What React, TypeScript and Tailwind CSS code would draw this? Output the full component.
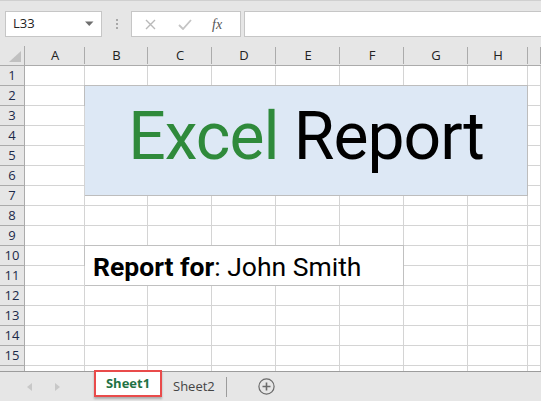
import { Fragment } from "react"

const COLS = ["A", "B", "C", "D", "E", "F", "G", "H", ""]
const ROWS = Array.from({ length: 16 }, (_, i) => i + 1)

// merged ranges (1-based, inclusive; col 1 = A)
const MERGES = [
  { c0: 2, c1: 8, r0: 2, r1: 7 },
  { c0: 2, c1: 6, r0: 10, r1: 11 },
]

function covered(c: number, r: number) {
  return MERGES.some(m => c >= m.c0 && c <= m.c1 && r >= m.r0 && r <= m.r1)
}

function NameBox() {
  return (
    <div className="flex items-center justify-between w-[97px] h-[26px] bg-white border border-[#c6c6c6] pl-[7px] pr-[7px]">
      <span className="text-[13px] text-[#222]">L33</span>
      <svg width="9" height="6" viewBox="0 0 9 6"><path d="M0 0.5h8.5L4.25 5z" fill="#6e6e6e" /></svg>
    </div>
  )
}

function FormulaButtons() {
  return (
    <div className="flex items-center w-[110px] h-[26px] bg-white border border-[#c6c6c6]">
      <svg className="ml-[13px]" width="11" height="11" viewBox="0 0 11 11">
        <path d="M1 1l9 9M10 1l-9 9" stroke="#b9b9b9" strokeWidth="1.4" />
      </svg>
      <svg className="ml-[22px]" width="14" height="11" viewBox="0 0 14 11">
        <path d="M1 6l4 4 8-9" stroke="#c4c4c4" strokeWidth="1.8" fill="none" />
      </svg>
      <span className="ml-[20px] italic text-[14px] text-[#555]" style={{ fontFamily: "'Liberation Serif', serif" }}>fx</span>
    </div>
  )
}

function SheetTabs() {
  return (
    <div className="flex items-center h-[30px] bg-[#e6e6e6] border-t border-[#9c9c9c]">
      <svg className="ml-[27px]" width="5" height="8" viewBox="0 0 5 8"><path d="M5 0v8L0 4z" fill="#c8c8c8" /></svg>
      <svg className="ml-[23px]" width="5" height="8" viewBox="0 0 5 8"><path d="M0 0v8l5-4z" fill="#c8c8c8" /></svg>
      <div className="ml-[34px] self-start mt-[-2px] w-[68px] h-[27px] border-[2px] border-[#e94b4b] flex items-center justify-center bg-white shadow-[0_2px_2px_rgba(0,0,0,0.25)]">
        <span className="text-[13px] font-bold text-[#1f7244]">Sheet1</span>
      </div>
      <span className="ml-[11px] text-[13px] text-[#444]">Sheet2</span>
      <div className="ml-[11px] w-px h-[20px] bg-[#9c9c9c]" />
      <svg className="ml-[31px]" width="17" height="17" viewBox="0 0 17 17">
        <circle cx="8.5" cy="8.5" r="7.6" stroke="#6a6a6a" strokeWidth="1.2" fill="none" />
        <path d="M8.5 4.5v8M4.5 8.5h8" stroke="#6a6a6a" strokeWidth="1.6" />
      </svg>
    </div>
  )
}

export default function App() {
  const ui = { fontFamily: "'Open Sans', 'Noto Sans', sans-serif" }
  const din = { fontFamily: "Roboto, 'Noto Sans', sans-serif" }

  return (
    <div className="w-[541px] h-[401px] overflow-hidden bg-white flex flex-col" style={ui}>
      {/* Formula bar */}
      <div className="h-[46px] bg-[#e6e6e6] border-t border-[#d0d0d0] flex items-start pt-[10px] pl-[5px]">
        <NameBox />
        <div className="ml-[14px] mt-[8px] flex flex-col gap-[2px]">
          <div className="w-[2px] h-[2px] bg-[#a8a8a8]" />
          <div className="w-[2px] h-[2px] bg-[#a8a8a8]" />
          <div className="w-[2px] h-[2px] bg-[#a8a8a8]" />
        </div>
        <div className="ml-[13px]"><FormulaButtons /></div>
        <div className="ml-[3px] flex-1 h-[26px] bg-white border border-r-0 border-[#c6c6c6]" />
      </div>

      {/* Sheet grid */}
      <div className="h-[325px] overflow-hidden grid grid-cols-[25px_60px_63px_64px_64px_64px_64px_64px_60px_1fr] auto-rows-[20px]">
        {/* Header row */}
        <div className="relative bg-[#e6e6e6] border-r border-b border-[#ababab]">
          <svg className="absolute right-[3px] bottom-[3px]" width="12" height="11" viewBox="0 0 12 11">
            <path d="M12 0v11H0z" fill="#c0c0c0" />
          </svg>
        </div>
        {COLS.map((c, i) => (
          <div
            key={i}
            className="bg-[#e6e6e6] border-b border-[#ababab] flex items-center justify-center text-[13px] text-[#222] relative"
          >
            {c}
            <div className="absolute right-0 top-[1px] bottom-[1px] w-px bg-[#ababab]" />
          </div>
        ))}

        {ROWS.map(r => (
          <Fragment key={r}>
            <div className="bg-[#e6e6e6] border-r border-b border-[#ababab] flex items-center justify-center text-[13px] text-[#1c2a4a]">
              {r}
            </div>
            {COLS.map((_, ci) => {
              const c = ci + 1
              if (r === 2 && c === 2) {
                return (
                  <div key={c} className="col-span-7 row-span-6 flex flex-col border-b border-[#d4d4d4]">
                    <div className="h-[111px] shrink-0 bg-[#dde8f5] border border-[#bdbdbd] -ml-px -mt-px flex items-center justify-center pb-[8px]">
                      <span className="text-[66px] leading-none tracking-[-1px]" style={din}>
                        <span className="text-[#2f8a3b]">Excel</span>{" "}
                        <span className="text-black">Report</span>
                      </span>
                    </div>
                    <div className="flex-1 grid grid-cols-[63px_64px_64px_64px_64px_64px_60px]">
                      {Array.from({ length: 7 }, (_, k) => (
                        <div key={k} className="border-r border-[#d4d4d4]" />
                      ))}
                    </div>
                  </div>
                )
              }
              if (r === 10 && c === 2) {
                return (
                  <div
                    key={c}
                    className="col-span-5 row-span-2 bg-white border border-[#c0c0c0] -ml-px -mt-px flex items-center pl-[8px] pt-[3px]"
                  >
                    <span className="text-[26.5px] leading-none text-black" style={din}>
                      <span className="font-bold">Report for</span>: John Smith
                    </span>
                  </div>
                )
              }
              if (covered(c, r)) return null
              return <div key={c} className="border-r border-b border-[#d4d4d4]" />
            })}
          </Fragment>
        ))}
      </div>

      <SheetTabs />
    </div>
  )
}
